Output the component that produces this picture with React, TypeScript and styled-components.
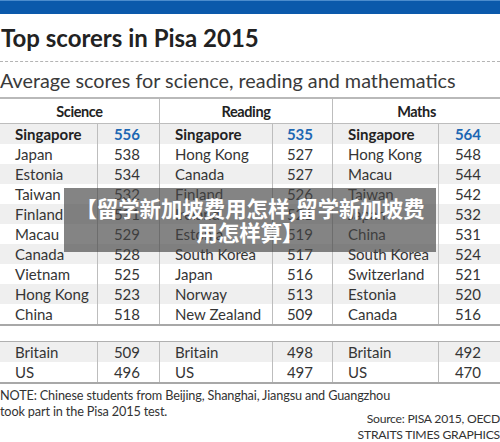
import styled, { createGlobalStyle } from 'styled-components';

const GlobalStyle = createGlobalStyle`
  html, body {
    margin: 0;
    padding: 0;
    background: #ffffff;
  }
  body {
    font-family: Lato, "Open Sans", "Liberation Sans", sans-serif;
    color: #333333;
  }
`;

const Page = styled.div`
  position: relative;
  width: 500px;
  height: 442px;
  overflow: hidden;
  background: #ffffff;
`;

const TopBar = styled.div`
  height: 14px;
  background: #0b59ab;
  border-top: 1px solid #4c8ccd;
  box-sizing: border-box;
`;

const Title = styled.h1`
  margin: 0;
  height: 48px;
  line-height: 48px;
  font-size: 24px;
  font-weight: 700;
  color: #222222;
  border-bottom: 1px dashed #b4b4b4;
  box-sizing: border-box;
  padding-left: 1px;
`;

const Subtitle = styled.div`
  height: 37px;
  line-height: 36px;
  font-size: 19.8px;
  color: #3a3a3a;
  border-bottom: 2px solid #b9b9b9;
  box-sizing: border-box;
`;

const Grid = styled.div`
  display: grid;
  grid-template-columns: 98px 62px 113px 60px 106px 61px;
`;

const MainGrid = styled(Grid)`
  border-bottom: 2px solid #a8a8a8;
`;

const ExtraGrid = styled(Grid)`
  margin-top: 15px;
  border-top: 1px solid #b0b0b0;
  border-bottom: 2px solid #a8a8a8;
`;

const Head = styled.div<{ $last?: boolean }>`
  grid-column: span 2;
  height: 25px;
  line-height: 25px;
  text-align: center;
  font-size: 14.5px;
  font-weight: 700;
  letter-spacing: -0.4px;
  color: #222222;
  border-bottom: 1px solid #bdbdbd;
  border-right: ${(p) => (p.$last ? 'none' : '1px solid #bdbdbd')};
  box-sizing: border-box;
`;

const Cell = styled.div<{ $stripe?: boolean; $top?: boolean; $last?: boolean }>`
  height: 20px;
  line-height: 20px;
  font-size: 15px;
  font-weight: ${(p) => (p.$top ? 700 : 400)};
  color: ${(p) => (p.$top ? '#222222' : '#353535')};
  background: ${(p) => (p.$stripe ? '#efefef' : '#ffffff')};
  border-right: ${(p) => (p.$last ? 'none' : '1px solid #bdbdbd')};
  box-sizing: border-box;
  white-space: nowrap;
`;

const Name = styled(Cell)`
  padding-left: 15px;
`;

const Score = styled(Cell)`
  text-align: right;
  padding-right: 19px;
  color: ${(p) => (p.$top ? '#1d67b3' : '#353535')};
`;

const Footer = styled.div`
  line-height: 16px;
  color: #333333;
  padding-top: 3px;
`;

const Note = styled.div`
  font-size: 12.7px;
  letter-spacing: -0.15px;
`;

const Source = styled.div`
  margin-top: -8px;
  text-align: right;
  font-size: 12.2px;
  letter-spacing: -0.25px;
`;

const Overlay = styled.div`
  position: absolute;
  left: 64px;
  top: 188px;
  width: 372px;
  height: 64px;
  box-sizing: border-box;
  padding: 8px 10px;
  background: rgba(68, 68, 68, 0.66);
  color: #ffffff;
  text-align: center;
  font-family: "Noto Sans CJK SC", "Noto Sans", sans-serif;
  font-size: 21.4px;
  font-weight: 700;
  line-height: 24px;
`;

type Entry = [string, number];
type Column = { title: string; top: Entry[]; extra: Entry[] };

const columns: Column[] = [
  {
    title: 'Science',
    top: [
      ['Singapore', 556], ['Japan', 538], ['Estonia', 534], ['Taiwan', 532], ['Finland', 531],
      ['Macau', 529], ['Canada', 528], ['Vietnam', 525], ['Hong Kong', 523], ['China', 518],
    ],
    extra: [['Britain', 509], ['US', 496]],
  },
  {
    title: 'Reading',
    top: [
      ['Singapore', 535], ['Hong Kong', 527], ['Canada', 527], ['Finland', 526], ['Ireland', 521],
      ['Estonia', 519], ['South Korea', 517], ['Japan', 516], ['Norway', 513], ['New Zealand', 509],
    ],
    extra: [['Britain', 498], ['US', 497]],
  },
  {
    title: 'Maths',
    top: [
      ['Singapore', 564], ['Hong Kong', 548], ['Macau', 544], ['Taiwan', 542], ['Japan', 532],
      ['China', 531], ['South Korea', 524], ['Switzerland', 521], ['Estonia', 520], ['Canada', 516],
    ],
    extra: [['Britain', 492], ['US', 470]],
  },
];

const renderRows = (key: 'top' | 'extra', boldFirst: boolean) => {
  const count = columns[0][key].length;
  const cells = [];
  for (let r = 0; r < count; r++) {
    const stripe = r % 2 === 0;
    columns.forEach((col, c) => {
      const [name, score] = col[key][r];
      const top = boldFirst && r === 0;
      cells.push(
        <Name key={`${key}-n-${r}-${c}`} $stripe={stripe} $top={top}>
          {name}
        </Name>,
        <Score key={`${key}-s-${r}-${c}`} $stripe={stripe} $top={top} $last={c === columns.length - 1}>
          {score}
        </Score>,
      );
    });
  }
  return cells;
};

const App = () => (
  <Page>
    <GlobalStyle />
    <TopBar />
    <Title>Top scorers in Pisa 2015</Title>
    <Subtitle>Average scores for science, reading and mathematics</Subtitle>
    <MainGrid>
      {columns.map((col, i) => (
        <Head key={col.title} $last={i === columns.length - 1}>
          {col.title}
        </Head>
      ))}
      {renderRows('top', true)}
    </MainGrid>
    <ExtraGrid>{renderRows('extra', false)}</ExtraGrid>
    <Footer>
      <Note>
        NOTE: Chinese students from Beijing, Shanghai, Jiangsu and Guangzhou
        <br />
        took part in the Pisa 2015 test.
      </Note>
      <Source>
        Source: PISA 2015, OECD
        <br />
        STRAITS TIMES GRAPHICS
      </Source>
    </Footer>
    <Overlay>【留学新加坡费用怎样,留学新加坡费用怎样算】</Overlay>
  </Page>
);

export default App;
